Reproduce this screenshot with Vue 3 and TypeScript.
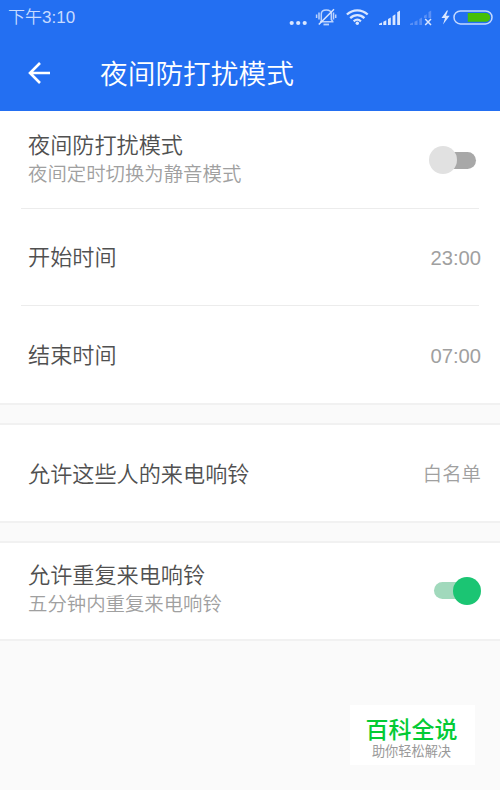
<script setup lang="ts">
import { ref } from 'vue'

interface Row {
  title: string
  hint?: string
  value?: string
  latin?: boolean
  on?: boolean
}

const groups = ref<Row[][]>([
  [
    { title: '夜间防打扰模式', hint: '夜间定时切换为静音模式', on: false },
    { title: '开始时间', value: '23:00', latin: true },
    { title: '结束时间', value: '07:00', latin: true },
  ],
  [{ title: '允许这些人的来电响铃', value: '白名单' }],
  [{ title: '允许重复来电响铃', hint: '五分钟内重复来电响铃', on: true }],
])

function toggle(row: Row) {
  if (row.on !== undefined) row.on = !row.on
}
</script>

<template>
  <div class="screen">
    <header class="top">
      <div class="status">
        <span class="clock">下午3:10</span>
        <svg class="indicators" width="212" height="36" viewBox="288 0 212 36" fill="#d9e6ff">
          <circle cx="291.7" cy="23" r="2.1" />
          <circle cx="298.2" cy="23" r="2.1" />
          <circle cx="304.7" cy="23" r="2.1" />
          <g fill="none" stroke="#bcd3fd" stroke-width="1.500">
            <path d="M320 21.800h13.500M321.300 21.500v-7.500c0-2.500 2-4 5-4s5 1.500 5 4v5.500l1.700 2.300" />
            <path d="M318.800 24.500L334 9.300" stroke="#d9e6ff" />
            <path d="M319 12.500v7M316.600 14.500v3.500M333.500 12.500v7M335.700 14.500v3.500" />
            <path d="M323.500 24.500h5.500" stroke-width="1.800" />
          </g>
          <g fill="none" stroke="#d9e6ff" stroke-width="2.300">
            <path d="M346.900 14.500c6-5.600 14.800-5.600 20.800 0" />
            <path d="M350.200 18.100c4.200-4 10-4 14.200 0" />
            <path d="M353.700 21.300c2.200-2 5-2 7.200 0" />
          </g>
          <circle cx="357.300" cy="23.300" r="1.700" />
          <path d="M379 25v-1.200l3-1.300v2.500zM383.300 25v-3.200l3-1.500v4.700zM388 25v-6l2.800-1.500v7.500zM392.600 25v-9l2.800-1.700v10.700zM397.200 25v-12.800l2.800-1.700v14.500z" />
          <path fill="#5a90f6" d="M410 25v-1.200l3-1.300v2.500zM414.500 25v-3.200l3-1.500v4.700zM419.300 25v-6l2.700-1.500v7.500zM424 18v-2.300l2.700-1.400v3.700zM428.500 18v-6l2.700-1.500v7.500z" />
          <path fill="none" stroke="#d9e6ff" stroke-width="1.500" d="M425.200 19l5.800 6M431 19l-5.800 6" />
          <path d="M446.900 10.500l-5.400 7.400h3.500l-2 6.600l6.700-8.700h-3.700l2-5.300z" />
          <rect x="454" y="10.900" width="38" height="13" rx="6.500" fill="none" stroke="#c5d9ff" stroke-width="1.500" />
          <path fill="#46bf08" d="M467.800 13h18a4.300 4.300 0 0 1 0 8.800h-18z" />
        </svg>
      </div>
      <div class="bar">
        <svg class="back" width="24" height="24" viewBox="0 0 24 24" fill="none" stroke="#fff" stroke-width="2.600">
          <path d="M23 12H3M13 2L3 12l10 10" />
        </svg>
        <h1>夜间防打扰模式</h1>
      </div>
    </header>

    <main>
      <section v-for="(group, g) in groups" :key="g" class="group">
        <div v-for="row in group" :key="row.title" class="row">
          <div class="label">
            <div class="title">{{ row.title }}</div>
            <div v-if="row.hint" class="hint">{{ row.hint }}</div>
          </div>
          <span v-if="row.value" class="value" :class="{ latin: row.latin }">{{ row.value }}</span>
          <button v-else class="switch" :class="{ on: row.on }" @click="toggle(row)">
            <span class="knob"></span>
          </button>
        </div>
      </section>
    </main>

    <aside class="badge">
      <strong>百科全说</strong>
      <span>助你轻松解决</span>
    </aside>
  </div>
</template>

<style>
body {
  margin: 0;
  background: #fafafa;
}
</style>

<style scoped>
.screen {
  position: relative;
  width: 500px;
  height: 790px;
  overflow: hidden;
  background: #fafafa;
  font-family: 'Noto Sans CJK SC', sans-serif;
  font-weight: 350;
}
.top {
  height: 111px;
  background: #236ff2;
}
.status {
  display: flex;
  justify-content: space-between;
  height: 36px;
}
.clock {
  padding-left: 8px;
  font-family: 'Liberation Sans', 'Noto Sans CJK SC', sans-serif;
  font-size: 17px;
  font-weight: 350;
  line-height: 36px;
  color: #c8dbff;
}
.bar {
  display: flex;
  align-items: center;
  height: 74px;
  padding-left: 27px;
}
h1 {
  margin: 0 0 2px 49px;
  font-size: 27.700px;
  font-weight: 350;
  line-height: 40px;
  color: #fff;
}
.group {
  box-sizing: border-box;
  background: #fff;
  border-bottom: 2px solid #f1f1f1;
  margin-bottom: 18px;
}
.group + .group {
  border-top: 2px solid #f1f1f1;
}
.row {
  display: flex;
  align-items: center;
  justify-content: space-between;
  box-sizing: border-box;
  height: 97px;
  padding: 0 19px 0 28px;
}
.row + .row {
  background: linear-gradient(#ececec, #ececec) 21px 0 / 458px 1px no-repeat;
}
.group:first-child .row:last-child {
  height: 98px;
}
.group + .group .row {
  height: 96px;
}
.label {
  padding-bottom: 3px;
}
.title {
  font-size: 22.150px;
  line-height: 30px;
  color: #505050;
}
.hint {
  padding-top: 1px;
  font-size: 19.400px;
  line-height: 28px;
  color: #a0a0a0;
}
.group:first-child .label:has(.hint) {
  padding-bottom: 5px;
}
.group:last-child .label:has(.hint) {
  padding-bottom: 7px;
}
.value {
  padding-bottom: 2px;
  font-size: 19.400px;
  color: #a0a0a0;
}
.latin {
  padding: 4px 0 0;
  font-family: 'Liberation Sans', sans-serif;
  font-size: 20.200px;
}
.switch {
  position: relative;
  width: 43px;
  height: 17px;
  margin: 1px 5px 0 0;
  padding: 0;
  border: 0;
  border-radius: 9px;
  background: #a8a8a8;
}
.knob {
  position: absolute;
  top: -5.500px;
  left: -4px;
  width: 28px;
  height: 28px;
  border-radius: 50%;
  background: #e1e1e1;
}
.on {
  margin: 0 4px 1px 0;
  background: #a1d9bc;
}
.on .knob {
  left: 19px;
  background: #1bc573;
}
.badge {
  position: absolute;
  left: 350px;
  top: 705px;
  display: flex;
  flex-direction: column;
  align-items: center;
  box-sizing: border-box;
  width: 125px;
  height: 60px;
  padding: 9px 2px 0 0;
  background: #fff;
}
.badge strong {
  font-size: 23px;
  font-weight: 500;
  line-height: 28px;
  color: #04cb35;
}
.badge span {
  font-size: 13.200px;
  font-weight: 400;
  line-height: 18px;
  color: #999;
}
</style>
